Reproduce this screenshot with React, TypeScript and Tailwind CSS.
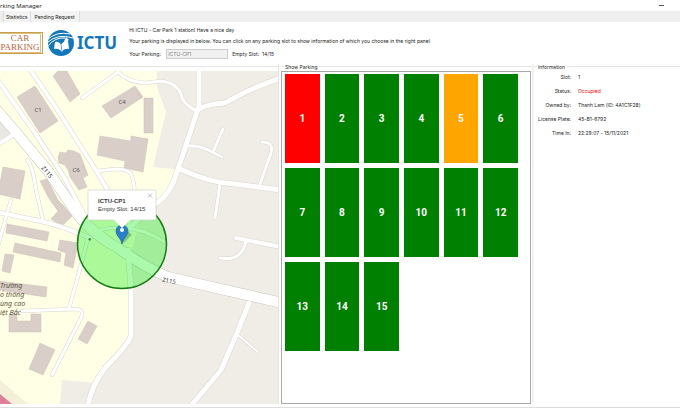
import React from "react";

const slots = Array.from({ length: 15 }, (_, i) => i + 1);

const details = [
  { label: "Slot:", value: "1" },
  { label: "Status:", value: "Occupied", alert: true },
  { label: "Owned by:", value: "Thanh Lam (ID: 4A1C1F28)" },
  { label: "License Plate:", value: "45-B1-6792" },
  { label: "Time In:", value: "22:29:07 - 15/11/2021" },
];

const roads: { d: string; w: number }[] = [
  { d: "M-3 79 L33 130 L64 177 L88 222 L110 240", w: 4 },
  { d: "M29 68 L55 106 L97 172 L112 198 L122 225", w: 4 },
  { d: "M97 171 L115 169 Q128 169 131 174 Q136 185 134 205 L125 240", w: 3 },
  { d: "M82 98 L118 72 Q128 82 145 83 L161 81 Q177 83 181 94 Q182 104 197 111", w: 3 },
  { d: "M199 68 L199 106 L187 142 L176 175 Q170 195 155 204 L125 232", w: 5 },
  { d: "M198 110 Q203 105 224 103 C236 98 245 90 278 79", w: 5 },
  { d: "M189 146 Q200 145 212 152 L222 157", w: 3 },
  { d: "M213 152 L223 129", w: 3 },
  { d: "M180 169 Q210 183 235 184 L281 190", w: 5 },
  { d: "M262 142 Q274 142 271 153 L260 184", w: 3 },
  { d: "M220 184 L215 218", w: 3 },
  { d: "M236 238 L281 247", w: 4 },
  { d: "M246 241 Q242 262 220 258", w: 3 },
  { d: "M249 303 L237 333 L221 370 L190 407", w: 5 },
  { d: "M238 335 L258 352", w: 2 },
  { d: "M-3 212 L40 221 Q60 225 90 238", w: 4 },
  { d: "M27 160 Q33 166 36 190 L43 221", w: 3 },
  { d: "M11 200 L6 217 L-3 250", w: 3 },
  { d: "M88 238 L77 280 L69 308", w: 3 },
  { d: "M22 311 L75 309 Q85 309 81 318 L52 375", w: 3 },
  { d: "M128 250 L131 290 L131 336 Q128 345 105 368 Q90 388 88 407", w: 5 },
  { d: "M-3 145 L16 133", w: 4 },
  { d: "M93 232 Q130 220 165 242", w: 3 },
];

const buildings = [
  "17,97 35,86 58,121 40,133",
  "53,76 58,71 67,71 80,94 70,102",
  "102,106 135,86 143,97 111,118",
  "100,136 131,141 131,136 148,139 143,172 124,168 125,161 97,155",
  "144,98 153,98 153,133 144,133",
  "58,157 60,152 66,153 68,150 74,151 80,154 83,162 88,175 83,178 87,187 79,190 70,177 68,170 65,165 59,163",
  "3,167 25,171 20,199 -2,194",
  "40,181 47,179 58,200 63,205 72,216 62,226 51,219 58,211 48,197",
  "7,224 49,232 47,241 6,233",
  "15,243 61,253 60,262 13,252",
  "60,240 78,243 73,268 64,265 66,253 58,250",
  "5,254 14,255 10,273 2,271",
  "-2,281 47,287 46,297 -2,290",
  "9,314 17,314 17,321 31,321 31,314 41,314 41,332 9,332",
  "40,343 55,350 43,375 29,369",
  "88,321 97,326 87,344 78,339",
  "138,93 142,96 140,98",
];

const mainRoad =
  "M-6 107 L14 130 L48 171 L78 215 Q92 234 118 248 Q144 267 168 277 L278 302 L290 305";

function ParkingMap() {
  return (
    <div className="relative min-h-0 flex-1 overflow-hidden bg-[#ffffe5]">
      <svg
        viewBox="0 71 278 333"
        preserveAspectRatio="xMidYMid slice"
        className="absolute inset-0 h-full w-full"
        role="img"
        aria-label="Map of the car park"
      >
        <polygon
          points="157,71 278,71 278,404 88,404 95,380 131,342 131,290 130,260 140,215 157,203 178,175 173,169 153,167 166,112 157,88"
          fill="#f0ede6"
        />
        <polygon points="62,380 98,383 88,404 60,404" fill="#f0ede6" />
        <polygon points="0,120 12,132 0,143" fill="#eae8e2" />
        <polygon points="0,380 28,404 0,404" fill="#f3efd9" />
        <polygon points="0,394 12,404 0,404" fill="#df7f98" />
        <g fill="#d9cfc8" stroke="#cabfb8" strokeWidth="0.5">
          {buildings.map((p) => (
            <polygon key={p} points={p} />
          ))}
        </g>
        <g fill="none" strokeLinecap="round" strokeLinejoin="round">
          {roads.map((r) => (
            <path key={r.d} d={r.d} stroke="#d8d5d0" strokeWidth={r.w + 1} />
          ))}
          <path d={mainRoad} stroke="#c3c0bb" strokeWidth="11" />
          {roads.map((r) => (
            <path key={r.d} d={r.d} stroke="#fff" strokeWidth={r.w} />
          ))}
          <path d={mainRoad} stroke="#fff" strokeWidth="10" />
        </g>
        <g
          fontFamily="'Noto Sans', sans-serif"
          fontSize="6"
          fill="#555"
          textAnchor="middle"
        >
          <text x="38" y="112">C1</text>
          <text x="122" y="104">C4</text>
          <text x="76" y="172">C6</text>
          <text x="47" y="174" fill="#333" transform="rotate(51 47 172)">Z115</text>
          <text x="169" y="283" fill="#333" transform="rotate(10 169 281)">Z115</text>
        </g>
        <g
          fontFamily="'Noto Sans', sans-serif"
          fontSize="7"
          fontStyle="italic"
          fill="#5d5547"
        >
          <text x="0" y="288">Trường</text>
          <text x="0" y="297">ổ thông</text>
          <text x="0" y="306">ùng cao</text>
          <text x="0" y="315">iệt Bắc</text>
        </g>
        <circle
          cx="122"
          cy="244"
          r="44.5"
          fill="#00ee00"
          fillOpacity="0.33"
          stroke="#167d16"
          strokeWidth="1.5"
        />
        <path d="M88 239 l3 -1 l-1 3z" fill="#2b6b3a" />
        <path d="M122 244 L132 235 L129 232 L122 238z" fill="#356b45" opacity="0.35" />
        <path
          d="M122 244 C121 238 116 236 116 231 A6 6 0 0 1 128 231 C128 236 123 238 122 244z"
          fill="#2a7fc9"
          stroke="#1f64a4"
          strokeWidth="0.7"
        />
        <g fill="#fff">
          <rect x="88" y="190" width="68" height="30" rx="1" stroke="#c9c9c9" strokeWidth="0.6" />
          <path d="M113 219 L122 228 L131 219z" />
          <circle cx="122" cy="230" r="2" />
        </g>
        <path d="M148 193.500 l4 4 m0 -4 l-4 4" stroke="#aaa" strokeWidth="0.8" />
        <g fontFamily="'Liberation Sans', Arial, sans-serif" fontSize="6" fill="#333">
          <text x="98" y="203" fontWeight="bold">ICTU-CP1</text>
          <text x="98" y="211">Empty Slot: 14/15</text>
        </g>
      </svg>
    </div>
  );
}

function IctuLogo() {
  return (
    <div className="flex items-center gap-0.5 text-[#1477ba]">
      <svg viewBox="0 0 28 28" className="size-7" aria-hidden="true">
        <circle cx="14" cy="14" r="13" fill="#1477ba" />
        <path
          d="M0 11 Q9 2 23 5 M0 14 Q10 4 26 9 M1 17 Q8 8 18 9"
          fill="none"
          stroke="#fff"
          strokeWidth="1"
        />
        <path d="M8 13 Q12 12 14 16 Q16 12 21 12 L22 20 Q17 19 15 23 Q12 19 7 20z" fill="#fff" />
        <path d="M14 16 L15 22" stroke="#1477ba" strokeWidth="0.7" />
        <path d="M19 8 L22 11 L16 15z" fill="#fff" />
      </svg>
      <span className="font-['Noto_Sans',sans-serif] text-[17px] leading-7 font-bold">ICTU</span>
    </div>
  );
}

function GroupTitle({ children }: { children: React.ReactNode }) {
  return (
    <h2 className="flex h-[5px] items-center gap-px before:h-px before:w-[3px] before:bg-[#e4e4e4] after:h-px after:flex-1 after:bg-[#e4e4e4]">
      {children}
    </h2>
  );
}

export default function App() {
  return (
    <div className="flex min-h-screen flex-col overflow-hidden bg-white font-['Inter','Liberation_Sans',sans-serif] text-[5px] leading-[6px] text-[#222]">
      <div className="flex h-[11px] items-center justify-between pr-4 font-['Noto_Sans',sans-serif] text-[6px]">
        <span>rking Manager</span>
        <button type="button" aria-label="Minimize" className="flex h-2 w-[5px] items-center">
          <span className="h-px w-full bg-[#555]" />
        </button>
      </div>
      <nav className="flex h-[11px] items-stretch bg-[#eee] pl-[3px]">
        <button type="button" className="border-x border-[#ddd] bg-[#f3f3f3] px-0.5">Statistics</button>
        <button type="button" className="border-r border-[#ddd] bg-[#f3f3f3] px-1">Pending Request</button>
      </nav>

      <header className="flex h-[42px] items-center">
        <div className="w-[43px] border border-l-0 border-[#c9a04a] pr-px">
          <div className="border-y border-r border-[#dcc081] text-center font-['Liberation_Serif',serif] text-[9px] leading-[9px] text-[#b5663c]">
            <div>CAR</div>
            <div>PARKING</div>
          </div>
        </div>
        <div className="ml-1">
          <IctuLogo />
        </div>
        <div className="ml-3 flex flex-col gap-[5px]">
          <p>Hi ICTU - Car Park 1 station! Have a nice day</p>
          <p>
            Your parking is displayed in below. You can click on any parking slot to show
            information of which you choose in the right panel
          </p>
          <div className="flex items-center">
            <label htmlFor="parking" className="w-[37px]">Your Parking:</label>
            <input
              id="parking"
              disabled
              value="ICTU-CP1"
              className="h-[10px] w-[62px] border border-[#ccc] bg-[#f0f0f0] px-px text-[#888]"
            />
            <span className="ml-1">Empty Slot:&nbsp; 14/15</span>
          </div>
        </div>
      </header>

      <main className="grid flex-1 grid-cols-[281fr_251fr_148fr] border-b border-[#ddd] pb-[3px]">
        <section className="mr-0.5 flex flex-col border-r border-[#e4e4e4]">
          <div className="mt-0.5 mb-1 h-px bg-[#e4e4e4]" />
          <ParkingMap />
        </section>

        <section className="flex flex-col">
          <GroupTitle>Show Parking</GroupTitle>
          <div className="mt-0.5 mr-px flex-1 border border-[#a8a8a8] pt-0.5 pr-3 pl-[3px]">
            <div className="grid auto-rows-[89px] grid-cols-6 gap-[5px]">
              {slots.map((n) => (
                <button
                  key={n}
                  type="button"
                  className={`font-['Roboto',sans-serif] text-[10px] font-bold text-white ${
                    n === 1 ? "bg-[#ff0000]" : n === 5 ? "bg-[#ffa500]" : "bg-[#008000]"
                  }`}
                >
                  {n}
                </button>
              ))}
            </div>
          </div>
        </section>

        <section className="border-l-2 border-[#f3f3f3]">
          <GroupTitle>Information</GroupTitle>
          <dl className="mt-[5px] grid grid-cols-[37px_1fr] gap-x-[7px] gap-y-2">
            {details.map((d) => (
              <React.Fragment key={d.label}>
                <dt className="text-right">{d.label}</dt>
                <dd className={d.alert ? "text-[#f00]" : ""}>{d.value}</dd>
              </React.Fragment>
            ))}
          </dl>
        </section>
      </main>
    </div>
  );
}
